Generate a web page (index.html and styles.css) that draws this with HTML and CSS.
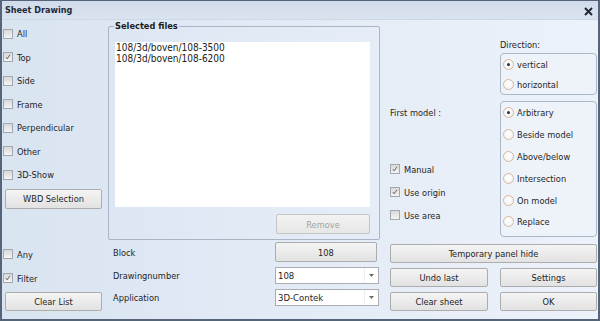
FILE: index.html
```html
<!DOCTYPE html>
<html>
<head>
<meta charset="utf-8">
<link rel="stylesheet" href="styles.css">
</head>
<body>
<div class="window">
  <div class="titlebar">
    <span class="title">Sheet Drawing</span>
    <svg class="close" width="9" height="9" viewBox="0 0 9 9"><path d="M1 1 L8 8 M8 1 L1 8" stroke="#1f2933" stroke-width="2" fill="none"/></svg>
  </div>
  <div class="body">
    <div class="left">
      <div class="checks">
        <div class="row"><span class="cb"></span>All</div>
        <div class="row"><span class="cb on"><svg viewBox="0 0 10 10"><path d="M2.3 5 L4 7.3 L7.4 2.2" stroke="#555" stroke-width="1.1" fill="none"/></svg></span>Top</div>
        <div class="row"><span class="cb"></span>Side</div>
        <div class="row"><span class="cb"></span>Frame</div>
        <div class="row"><span class="cb"></span>Perpendicular</div>
        <div class="row"><span class="cb"></span>Other</div>
        <div class="row"><span class="cb"></span>3D-Show</div>
      </div>
      <button class="btn wide">WBD Selection</button>
      <div class="left-bottom">
        <div class="row tall"><span class="cb"></span>Any</div>
        <div class="row tall"><span class="cb on"><svg viewBox="0 0 10 10"><path d="M2.3 5 L4 7.3 L7.4 2.2" stroke="#555" stroke-width="1.1" fill="none"/></svg></span>Filter</div>
        <button class="btn wide clear">Clear List</button>
      </div>
    </div>

    <div class="middle">
      <fieldset class="group">
        <legend>Selected files</legend>
        <div class="list">
          <div>108/3d/boven/108-3500</div>
          <div>108/3d/boven/108-6200</div>
        </div>
        <div class="remove-row"><button class="btn disabled">Remove</button></div>
      </fieldset>
      <div class="form">
        <span class="flabel">Block</span>
        <button class="btn block">108</button>
        <span class="flabel">Drawingnumber</span>
        <div class="combo"><span class="val">108</span><span class="arrow"><svg width="5" height="3" viewBox="0 0 5 3"><path d="M0 0 H5 L2.5 3 Z" fill="#6b6b6b"/></svg></span></div>
        <span class="flabel">Application</span>
        <div class="combo"><span class="val">3D-Contek</span><span class="arrow"><svg width="5" height="3" viewBox="0 0 5 3"><path d="M0 0 H5 L2.5 3 Z" fill="#6b6b6b"/></svg></span></div>
      </div>
    </div>

    <div class="right">
      <div class="options">
        <div class="dir">
          <div class="dlabel">Direction:</div>
          <div class="rbox small">
            <div class="rrow"><span class="rd on"></span>vertical</div>
            <div class="rrow"><span class="rd"></span>horizontal</div>
          </div>
        </div>
        <div class="first">
          <div class="flabel2">First model :</div>
          <div class="rchecks">
            <div class="row r"><span class="cb on"><svg viewBox="0 0 10 10"><path d="M2.3 5 L4 7.3 L7.4 2.2" stroke="#555" stroke-width="1.1" fill="none"/></svg></span>Manual</div>
            <div class="row r"><span class="cb on"><svg viewBox="0 0 10 10"><path d="M2.3 5 L4 7.3 L7.4 2.2" stroke="#555" stroke-width="1.1" fill="none"/></svg></span>Use origin</div>
            <div class="row r"><span class="cb"></span>Use area</div>
          </div>
        </div>
        <div class="rbox big">
          <div class="rrow m"><span class="rd on"></span>Arbitrary</div>
          <div class="rrow m"><span class="rd"></span>Beside model</div>
          <div class="rrow m"><span class="rd"></span>Above/below</div>
          <div class="rrow m"><span class="rd"></span>Intersection</div>
          <div class="rrow m"><span class="rd"></span>On model</div>
          <div class="rrow m"><span class="rd"></span>Replace</div>
        </div>
      </div>
      <div class="buttons">
        <button class="btn span2">Temporary panel hide</button>
        <button class="btn">Undo last</button>
        <button class="btn">Settings</button>
        <button class="btn">Clear sheet</button>
        <button class="btn">OK</button>
      </div>
    </div>
  </div>
</div>
</body>
</html>
```

FILE: styles.css
```css
html, body {
  margin: 0;
  padding: 0;
  background: #ffffff;
}

.window {
  width: 600px;
  height: 321px;
  box-sizing: border-box;
  border: 2px solid #56647a;
  border-top: 1px solid #56647a;
  display: flex;
  flex-direction: column;
  font-family: "DejaVu Sans Condensed", "DejaVu Sans", sans-serif;
  font-size: 9.2px;
  color: #1e1e1e;
  background: linear-gradient(90deg, #d9e4f1 0%, #e3ebf6 50%, #ecf2fa 100%);
  overflow: hidden;
}

.titlebar {
  height: 19px;
  box-sizing: border-box;
  display: flex;
  align-items: center;
  justify-content: space-between;
  padding: 0 5px 0 3px;
  background: linear-gradient(#d0dbea, #dae4f0);
  border-bottom: 1px solid #cdd8e6;
}

.title {
  font-weight: bold;
  font-size: 9px;
  color: #1c2a3a;
}

.close {
  display: block;
  margin-top: 3px;
}

.body {
  flex: 1;
  display: flex;
  min-height: 0;
}

/* left column */
.left {
  width: 106px;
  box-sizing: border-box;
  display: flex;
  flex-direction: column;
  padding: 2px 0 8px 1px;
}

.row {
  display: flex;
  align-items: center;
  height: 23.5px;
  gap: 4px;
}

.row.tall {
  height: 24px;
}

.cb {
  width: 10px;
  height: 10px;
  box-sizing: border-box;
  border: 1px solid #a2a8b0;
  background: linear-gradient(#d9d9d9, #f3f3f3);
  display: flex;
  flex: none;
}

.cb svg {
  width: 8px;
  height: 8px;
}

.btn {
  font-family: inherit;
  font-size: 9.2px;
  color: #1e1e1e;
  padding: 0;
  height: 20px;
  box-sizing: border-box;
  border: 1px solid #adadad;
  border-radius: 2px;
  background: linear-gradient(#f4f4f4, #e2e2e2);
}

.btn.wide {
  width: 97px;
  margin-left: 2px;
  margin-top: 2px;
}

.btn.clear {
  margin-top: 2px;
  height: 19px;
}

.btn.disabled {
  color: #a3a3a3;
  border-color: #c6c6c6;
  background: linear-gradient(#f2f2f2, #e7e7e7);
}

.left-bottom {
  margin-top: auto;
  display: flex;
  flex-direction: column;
}

/* middle column */
.middle {
  width: 272px;
  display: flex;
  flex-direction: column;
}

.group {
  margin: 0;
  padding: 0 9px 5px 6px;
  border: 1px solid #a9b5c4;
  border-radius: 2px;
  min-width: 0;
}

.group legend {
  font-weight: bold;
  font-size: 9.2px;
  line-height: 12px;
  padding: 0 1px;
  margin-left: -1px;
  color: #1c1c1c;
}

.list {
  margin-top: 10px;
  height: 165px;
  background: #ffffff;
  font-size: 10px;
  line-height: 11px;
  padding-left: 1px;
  color: #222;
}

.remove-row {
  display: flex;
  justify-content: flex-end;
  margin-top: 7px;
}

.remove-row .btn {
  width: 94px;
}

.form {
  margin-top: 2px;
  display: grid;
  grid-template-columns: 167px 104px;
  grid-template-rows: 20px 17px 17px;
  row-gap: 5px;
  align-items: center;
}

.flabel {
  padding-left: 5px;
}

.btn.block {
  width: 102px;
  height: 20px;
}

.combo {
  height: 17px;
  box-sizing: border-box;
  background: #ffffff;
  border: 1px solid #abadb3;
  display: flex;
  align-items: center;
}

.combo .val {
  flex: 1;
  padding-left: 2px;
  font-size: 9.5px;
}

.combo .arrow {
  width: 13px;
  height: 100%;
  border-left: 1px solid #eeeeee;
  display: flex;
  align-items: center;
  justify-content: center;
}

.combo .arrow svg {
  display: block;
}

/* right column */
.right {
  flex: 1;
  padding-left: 10px;
  display: flex;
  flex-direction: column;
}

.options {
  display: grid;
  grid-template-columns: 98px 97px;
  column-gap: 12px;
  row-gap: 6px;
}

.dir {
  grid-column: 2;
  padding-top: 18px;
}

.dlabel {
  line-height: 14px;
  margin-bottom: 1px;
}

.rbox {
  border: 1px solid #aab7c7;
  border-radius: 4px;
  background: #eef3fa;
  padding-left: 2px;
}

.rbox.big {
  grid-column: 2;
  padding-bottom: 3px;
}

.rrow {
  height: 20px;
  display: flex;
  align-items: center;
  gap: 3px;
}

.rrow.m {
  height: 21.8px;
}

.rd {
  width: 11px;
  height: 11px;
  box-sizing: border-box;
  border-radius: 50%;
  border: 1px solid #d7b79c;
  background: radial-gradient(circle at 50% 40%, #ffffff, #f0f0f0);
  display: flex;
  align-items: center;
  justify-content: center;
  flex: none;
}

.rd.on::after {
  content: "";
  width: 3px;
  height: 3px;
  border-radius: 50%;
  background: #2e2e2e;
}

.first {
  grid-column: 1;
  grid-row: 2;
  display: flex;
  flex-direction: column;
  justify-content: space-between;
}

.flabel2 {
  padding-top: 5px;
  line-height: 14px;
}

.rchecks {
  padding-bottom: 10px;
}

.row.r {
  height: 23px;
}

.buttons {
  margin-top: 7px;
  display: grid;
  grid-template-columns: 98px 97px;
  column-gap: 12px;
  row-gap: 5px;
  grid-auto-rows: 19px;
}

.buttons .btn {
  height: 19px;
}

.span2 {
  grid-column: 1 / 3;
}
```
